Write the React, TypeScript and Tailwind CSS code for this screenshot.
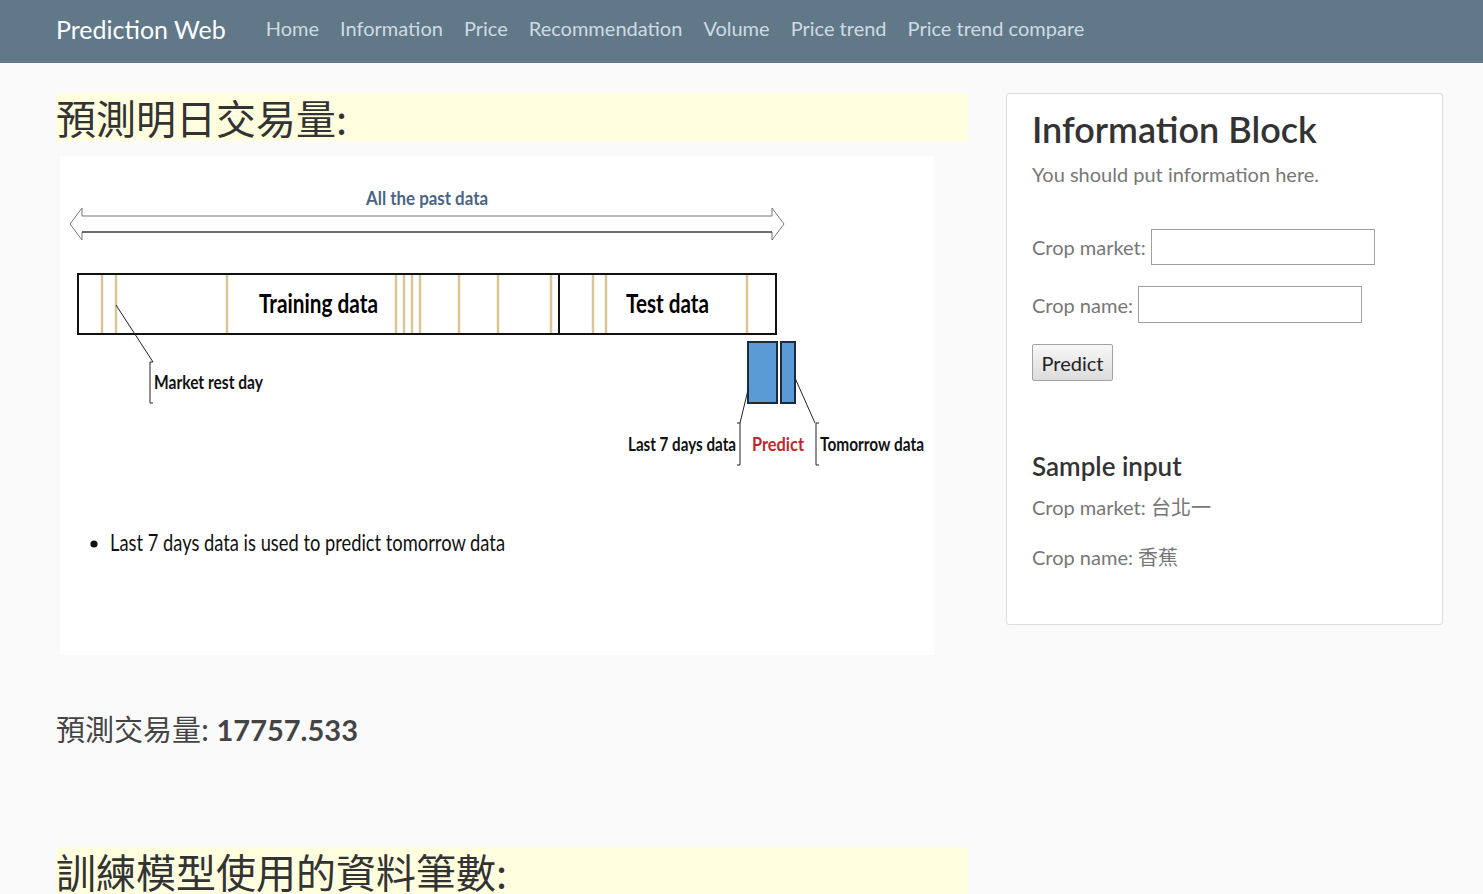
import React from 'react';

const NAV_LINKS = ['Home', 'Information', 'Price', 'Recommendation', 'Volume', 'Price trend', 'Price trend compare'];

// tan "market rest day" marks inside the timeline bar
const REST_DAYS = [42, 56, 167, 336, 344, 352, 360, 399, 438, 491, 533, 546, 687];

const sans = "font-['Lato','Noto_Sans_CJK_TC',sans-serif]";
const cjk = "font-['Noto_Sans_CJK_TC','Noto_Sans_CJK_SC',serif]";

function Diagram() {
  const t = { fontFamily: 'Lato, "Liberation Sans", sans-serif' };
  return (
    <svg width="874" height="499" viewBox="0 0 874 499" className="block">
      {/* all the past data arrow */}
      <text x="306" y="49" textLength="122" lengthAdjust="spacingAndGlyphs" fontSize="18" fontWeight="700" fill="#4a6583" style={t}>
        All the past data
      </text>
      <path d="M10,68 L22,52 L22,60 L712,60 L712,52 L724,68 L712,84 L712,76 L22,76 L22,84 Z" fill="#fff" stroke="#777" strokeWidth="1" />
      <line x1="22" y1="76" x2="712" y2="76" stroke="#222" strokeWidth="1.2" />

      {/* timeline bar */}
      <rect x="18" y="118" width="698" height="60" fill="#fff" />
      {REST_DAYS.map((x) => (
        <line key={x} x1={x} y1="119" x2={x} y2="177" stroke="#d8c792" strokeWidth="2.5" />
      ))}
      <rect x="18" y="118" width="698" height="60" fill="none" stroke="#111" strokeWidth="2" />
      <line x1="499" y1="118" x2="499" y2="178" stroke="#111" strokeWidth="2" />
      <text x="199" y="157" textLength="119" lengthAdjust="spacingAndGlyphs" fontSize="26" fontWeight="700" fill="#000" style={t}>
        Training data
      </text>
      <text x="566" y="157" textLength="83" lengthAdjust="spacingAndGlyphs" fontSize="26" fontWeight="700" fill="#000" style={t}>
        Test data
      </text>

      {/* market rest day callout */}
      <line x1="56" y1="149" x2="93" y2="206" stroke="#222" strokeWidth="1" />
      <path d="M93,206 L90,206 L90,247 L93,247" fill="none" stroke="#222" strokeWidth="1" />
      <text x="94" y="233" textLength="109" lengthAdjust="spacingAndGlyphs" fontSize="18" fontWeight="700" fill="#111" style={t}>
        Market rest day
      </text>

      {/* last 7 days / tomorrow blocks */}
      <rect x="688" y="186" width="29" height="61" fill="#5b9bd5" stroke="#1d2b3a" strokeWidth="2" />
      <rect x="721" y="186" width="14" height="61" fill="#5b9bd5" stroke="#1d2b3a" strokeWidth="2" />
      <line x1="688" y1="234" x2="680" y2="267" stroke="#222" strokeWidth="1" />
      <path d="M677,267 L680,267 L680,309 L677,309" fill="none" stroke="#222" strokeWidth="1" />
      <line x1="735" y1="222" x2="755" y2="267" stroke="#222" strokeWidth="1" />
      <path d="M759,267 L756,267 L756,309 L759,309" fill="none" stroke="#222" strokeWidth="1" />
      <text x="568" y="295" textLength="108" lengthAdjust="spacingAndGlyphs" fontSize="18" fontWeight="700" fill="#111" style={t}>
        Last 7 days data
      </text>
      <text x="692" y="295" textLength="52" lengthAdjust="spacingAndGlyphs" fontSize="19" fontWeight="700" fill="#c0272d" style={t}>
        Predict
      </text>
      <text x="760" y="295" textLength="104" lengthAdjust="spacingAndGlyphs" fontSize="18" fontWeight="700" fill="#111" style={t}>
        Tomorrow data
      </text>

      {/* bullet */}
      <circle cx="34" cy="388" r="3.6" fill="#111" />
      <text x="50" y="395" textLength="395" lengthAdjust="spacingAndGlyphs" fontSize="24" fill="#111" style={t}>
        Last 7 days data is used to predict tomorrow data
      </text>
    </svg>
  );
}

function InfoBlock() {
  return (
    <div className={`w-[437px] h-[532px] shrink-0 bg-white border border-[#dcdcdc] rounded-[3px] px-[25px] pt-[13px] ${sans}`}>
      <h2 className="text-[36px] leading-[44px] font-semibold text-[#333]">Information Block</h2>
      <p className="mt-[9px] text-[20px] leading-[28px] text-[#777]">You should put information here.</p>

      <div className="mt-[41px] h-[36px] flex items-center text-[20px] text-[#777]">
        <label>Crop market:</label>
        <input className="ml-[5px] w-[224px] h-[36px] border border-[#a0a0a0] bg-white outline-none" />
      </div>
      <div className="mt-[21px] h-[37px] flex items-center text-[20px] text-[#777]">
        <label>Crop name:</label>
        <input className="ml-[5px] w-[224px] h-[37px] border border-[#a0a0a0] bg-white outline-none" />
      </div>
      <button className="mt-[21px] w-[81px] h-[37px] border border-[#a3a3a3] rounded-[2px] bg-linear-to-b from-[#f7f7f7] to-[#dcdcdc] text-[20px] text-[#222]">
        Predict
      </button>

      <h3 className="mt-[69px] text-[26px] leading-[32px] font-semibold text-[#333]">Sample input</h3>
      <p className="mt-[11px] text-[20px] leading-[28px] text-[#777]">Crop market: 台北一</p>
      <p className="mt-[22px] text-[20px] leading-[28px] text-[#777]">Crop name: 香蕉</p>
    </div>
  );
}

export default function App() {
  return (
    <div className={`min-h-screen bg-[#fafafa] ${sans}`}>
      <nav className="h-[63px] bg-[#607888] flex items-center pl-[56px] pb-[4px]">
        <span className="text-[25px] text-white mr-[40px]">Prediction Web</span>
        <div className="flex gap-[21px] text-[20px] text-[#cfdbe3] mb-[4px]">
          {NAV_LINKS.map((l) => (
            <a key={l} href="#">
              {l}
            </a>
          ))}
        </div>
      </nav>

      <div className="flex pl-[56px] pt-[30px] gap-[38px]">
        <div className="w-[912px] shrink-0">
          <h2 className={`bg-[#ffffe0] text-[40px] leading-[48px] text-[#333] ${cjk}`}>預測明日交易量:</h2>
          <div className="ml-[4px] mt-[15px] w-[874px] h-[499px] bg-white">
            <Diagram />
          </div>
          <p className="mt-[53px] text-[29px] leading-[40px] text-[#444]">
            <span className={cjk}>預測交易量:</span> <b className="font-bold">17757.533</b>
          </p>
          <h2 className={`mt-[97px] bg-[#ffffe0] text-[40px] leading-[48px] text-[#333] ${cjk}`}>訓練模型使用的資料筆數:</h2>
        </div>
        <InfoBlock />
      </div>
    </div>
  );
}
